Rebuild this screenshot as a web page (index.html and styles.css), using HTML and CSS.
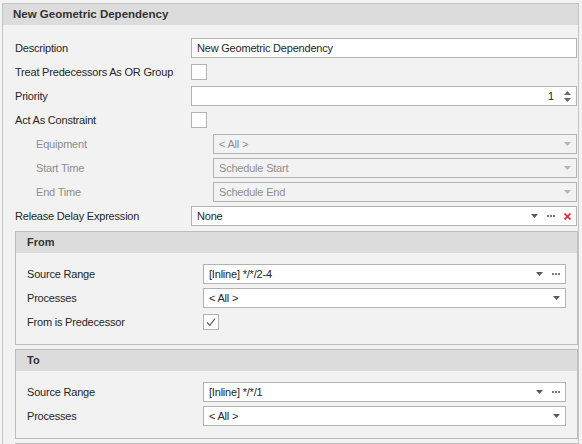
FILE: index.html
```html
<!DOCTYPE html>
<html>
<head>
<meta charset="utf-8">
<link rel="stylesheet" href="styles.css">
</head>
<body>
<div class="panel">
  <div class="panel-head">New Geometric Dependency</div>
  <div class="panel-body">
    <div class="row">
      <div class="label">Description</div>
      <div class="edit"><span class="val">New Geometric Dependency</span></div>
    </div>
    <div class="row">
      <div class="label">Treat Predecessors As OR Group</div>
      <div class="cb"></div>
    </div>
    <div class="row">
      <div class="label">Priority</div>
      <div class="edit num"><span class="val right">1</span>
        <span class="spin">
          <svg width="7" height="4" viewBox="0 0 7 4"><path d="M0 4H7L3.5 0Z" fill="#6a6a6a"/></svg>
          <svg width="7" height="4" viewBox="0 0 7 4"><path d="M0 0H7L3.5 4Z" fill="#6a6a6a"/></svg>
        </span>
      </div>
    </div>
    <div class="row">
      <div class="label">Act As Constraint</div>
      <div class="cb"></div>
    </div>
    <div class="row sub">
      <div class="label dis">Equipment</div>
      <div class="edit disabled"><span class="val">&lt; All &gt;</span><span class="btns"><svg class="arr" width="7" height="4" viewBox="0 0 7 4"><path d="M0 0H7L3.5 4Z" fill="#b5b5b5"/></svg></span></div>
    </div>
    <div class="row sub">
      <div class="label dis">Start Time</div>
      <div class="edit disabled"><span class="val">Schedule Start</span><span class="btns"><svg class="arr" width="7" height="4" viewBox="0 0 7 4"><path d="M0 0H7L3.5 4Z" fill="#b5b5b5"/></svg></span></div>
    </div>
    <div class="row sub">
      <div class="label dis">End Time</div>
      <div class="edit disabled"><span class="val">Schedule End</span><span class="btns"><svg class="arr" width="7" height="4" viewBox="0 0 7 4"><path d="M0 0H7L3.5 4Z" fill="#b5b5b5"/></svg></span></div>
    </div>
    <div class="row">
      <div class="label">Release Delay Expression</div>
      <div class="edit"><span class="val">None</span>
        <span class="btns">
          <svg class="arr" width="7" height="4" viewBox="0 0 7 4"><path d="M0 0H7L3.5 4Z" fill="#5a5a5a"/></svg>
          <svg class="dots" width="8" height="2" viewBox="0 0 8 2"><rect x="0" y="0" width="2" height="2" fill="#7a7a7a"/><rect x="3" y="0" width="2" height="2" fill="#7a7a7a"/><rect x="6" y="0" width="2" height="2" fill="#7a7a7a"/></svg>
          <svg class="x" width="7" height="7" viewBox="0 0 7 7"><path d="M0.5 0.5L6.5 6.5M6.5 0.5L0.5 6.5" stroke="#e8303a" stroke-width="1.8"/></svg>
        </span>
      </div>
    </div>

    <div class="group">
      <div class="group-head">From</div>
      <div class="group-body">
        <div class="row">
          <div class="label">Source Range</div>
          <div class="edit"><span class="val">[Inline] */*/2-4</span>
            <span class="btns">
              <svg class="arr" width="7" height="4" viewBox="0 0 7 4"><path d="M0 0H7L3.5 4Z" fill="#5a5a5a"/></svg>
              <svg class="dots" width="8" height="2" viewBox="0 0 8 2"><rect x="0" y="0" width="2" height="2" fill="#7a7a7a"/><rect x="3" y="0" width="2" height="2" fill="#7a7a7a"/><rect x="6" y="0" width="2" height="2" fill="#7a7a7a"/></svg>
            </span>
          </div>
        </div>
        <div class="row">
          <div class="label">Processes</div>
          <div class="edit"><span class="val">&lt; All &gt;</span>
            <span class="btns"><svg class="arr" width="7" height="4" viewBox="0 0 7 4"><path d="M0 0H7L3.5 4Z" fill="#5a5a5a"/></svg></span>
          </div>
        </div>
        <div class="row">
          <div class="label">From is Predecessor</div>
          <div class="cb"><svg width="14" height="14" viewBox="0 0 14 14"><path d="M3 7.5L5.8 10.3L11 3.6" fill="none" stroke="#555" stroke-width="1.1"/></svg></div>
        </div>
      </div>
    </div>

    <div class="group">
      <div class="group-head">To</div>
      <div class="group-body">
        <div class="row">
          <div class="label">Source Range</div>
          <div class="edit"><span class="val">[Inline] */*/1</span>
            <span class="btns">
              <svg class="arr" width="7" height="4" viewBox="0 0 7 4"><path d="M0 0H7L3.5 4Z" fill="#5a5a5a"/></svg>
              <svg class="dots" width="8" height="2" viewBox="0 0 8 2"><rect x="0" y="0" width="2" height="2" fill="#7a7a7a"/><rect x="3" y="0" width="2" height="2" fill="#7a7a7a"/><rect x="6" y="0" width="2" height="2" fill="#7a7a7a"/></svg>
            </span>
          </div>
        </div>
        <div class="row">
          <div class="label">Processes</div>
          <div class="edit"><span class="val">&lt; All &gt;</span>
            <span class="btns"><svg class="arr" width="7" height="4" viewBox="0 0 7 4"><path d="M0 0H7L3.5 4Z" fill="#5a5a5a"/></svg></span>
          </div>
        </div>
      </div>
    </div>

    <div class="group">
      <div class="group-head">&nbsp;</div>
      <div class="group-body"></div>
    </div>
  </div>
</div>
</body>
</html>
```

FILE: styles.css
```css
html, body {
  margin: 0;
  padding: 0;
  background: #f3f3f3;
  overflow: hidden;
}
body {
  font-family: "Liberation Sans", Arial, sans-serif;
  font-size: 11px;
  letter-spacing: -0.2px;
  color: #262626;
  width: 582px;
  height: 444px;
}
.panel {
  margin: 3px 0 0 2px;
  width: 577px;
  box-sizing: border-box;
  border: 1px solid #c4c4c4;
  border-bottom: none;
  background: #f2f2f2;
  height: 460px;
}
.panel-head {
  height: 21px;
  line-height: 20px;
  background: #dcdcdc;
  padding-left: 10px;
  font-weight: bold;
  font-size: 11.5px;
  letter-spacing: 0;
  color: #333;
}
.panel-body {
  padding: 13px 0 0 12px;
  display: flex;
  flex-direction: column;
  gap: 4px;
}
.row {
  display: flex;
  align-items: center;
  height: 20px;
  padding-right: 1px;
}
.label {
  width: 176px;
  flex: none;
  white-space: nowrap;
}
.label.dis { color: #8e8e8e; width: 177px; }
.row.sub { padding-left: 21px; }
.edit {
  flex: 1;
  height: 20px;
  box-sizing: border-box;
  border: 1px solid #b2b2b2;
  background: #fff;
  display: flex;
  align-items: center;
  padding: 0 5px 0 5px;
  min-width: 0;
}
.edit .val { flex: 1; white-space: nowrap; }
.edit .val.right { text-align: right; padding-right: 10px; }
.edit.disabled {
  background: #f2f2f2;
  color: #8e8e8e;
}
.btns {
  display: flex;
  align-items: center;
  gap: 0;
}
.btns .arr { display: block; margin-right: 0; }
.btns .dots { display: block; margin-left: 9px; }
.btns .x { display: block; margin-left: 9px; }
.spin {
  display: flex;
  flex-direction: column;
  gap: 3px;
  margin-right: 0;
}
.spin svg { display: block; }
.cb {
  width: 16px;
  height: 16px;
  box-sizing: border-box;
  border: 1px solid #b2b2b2;
  background: #fff;
  display: flex;
  align-items: center;
  justify-content: center;
}
.cb svg { display: block; }
.group {
  margin-top: 1px;
  border: 1px solid #bdbdbd;
  background: #f2f2f2;
}
.group + .group { margin-top: 0; }
.group-head {
  height: 21px;
  line-height: 20px;
  background: #dcdcdc;
  padding-left: 11px;
  font-weight: bold;
  letter-spacing: 0;
  color: #333;
}
.group-body {
  padding: 11px 10px 12px 11px;
  display: flex;
  flex-direction: column;
  gap: 4px;
}
```
